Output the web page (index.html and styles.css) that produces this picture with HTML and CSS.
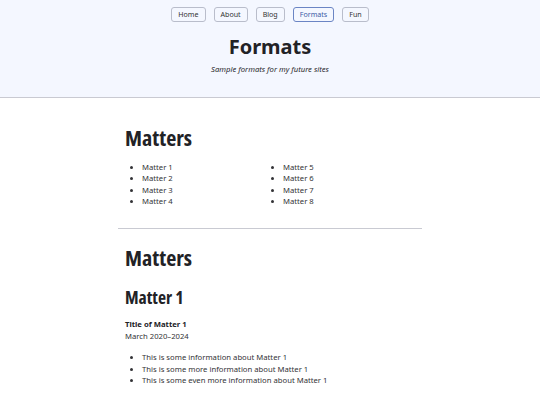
FILE: index.html
```html
<!DOCTYPE html>
<html lang="en-US">
<head>
    <meta charset="UTF-8">
    <meta name="viewport" content="width=device-width">
    <title>Formats</title>
    <link rel="stylesheet" href="styles.css">
</head>
<body>

<header class=top>
  <nav class=menu>
    <a href="#">Home</a>
    <a href="#">About</a>
    <a href="#">Blog</a>
    <a href="#" class=current>Formats</a>
    <a href="#">Fun</a>
  </nav>
  <h1 class=title>Formats</h1>
  <p class=tagline>Sample formats for my future sites</p>
</header>

<main class=page>
  <section>
    <h2>Matters</h2>
    <ul class=cols>
      <li>Matter 1</li>
      <li>Matter 2</li>
      <li>Matter 3</li>
      <li>Matter 4</li>
      <li>Matter 5</li>
      <li>Matter 6</li>
      <li>Matter 7</li>
      <li>Matter 8</li>
    </ul>
  </section>
  <hr>
  <section>
    <h2>Matters</h2>
    <h3>Matter 1</h3>
    <p class=entry><b>Title of Matter 1</b><br>March 2020&ndash;2024</p>
    <ul>
      <li>This is some information about Matter 1</li>
      <li>This is some more information about Matter 1</li>
      <li>This is some even more information about Matter 1</li>
    </ul>
  </section>
</main>

</body>
</html>
```

FILE: styles.css
```css
body {
    margin: 0;
    font: 7.7px/11.6px "Noto Sans", sans-serif;
    color: #333336;
    background: white;
}
.top {
    background: #f4f7ff;
    border-bottom: 1px solid #c9cad2;
    padding: 7px 0 21px;
    text-align: center;
}
.menu {
    display: flex;
    justify-content: center;
    gap: 8px;
}
.menu a {
    display: inline-block;
    padding: 1px 6px;
    border: 1px solid #b9bdcb;
    border-radius: 3px;
    color: #333;
    text-decoration: none;
    font: 7.1px/11px "Noto Sans", sans-serif;
}
.menu a.current {
    border-color: #6b85c4;
    color: #3b5ba6;
}
.title {
    font: bold 20px/26px "Noto Sans", sans-serif;
    color: #222226;
    margin: 12px 0 0;
}
.tagline {
    font-style: italic;
    margin: 4px 0 0;
    color: #2a2a2e;
}
.page {
    width: 290px;
    margin: 0 auto;
    padding: 26px 7px 20px;
}
h2 {
    font: bold 22px/27px "Open Sans", sans-serif;
    font-stretch: condensed;
    color: #222226;
    margin: 0 0 11px;
}
h3 {
    font: bold 17.6px/22px "Open Sans", sans-serif;
    font-stretch: condensed;
    color: #222226;
    margin: 15px 0 11px;
}
ul {
    margin: 0;
    padding-left: 17px;
}
.cols {
    column-count: 2;
    column-gap: 9px;
    margin-bottom: 20px;
}
.entry {
    margin: 0 0 10px;
}
.entry b {
    color: #222226;
}
hr {
    border: none;
    border-top: 1px solid #c9cad2;
    margin: 0 -7px 15px;
}
```
